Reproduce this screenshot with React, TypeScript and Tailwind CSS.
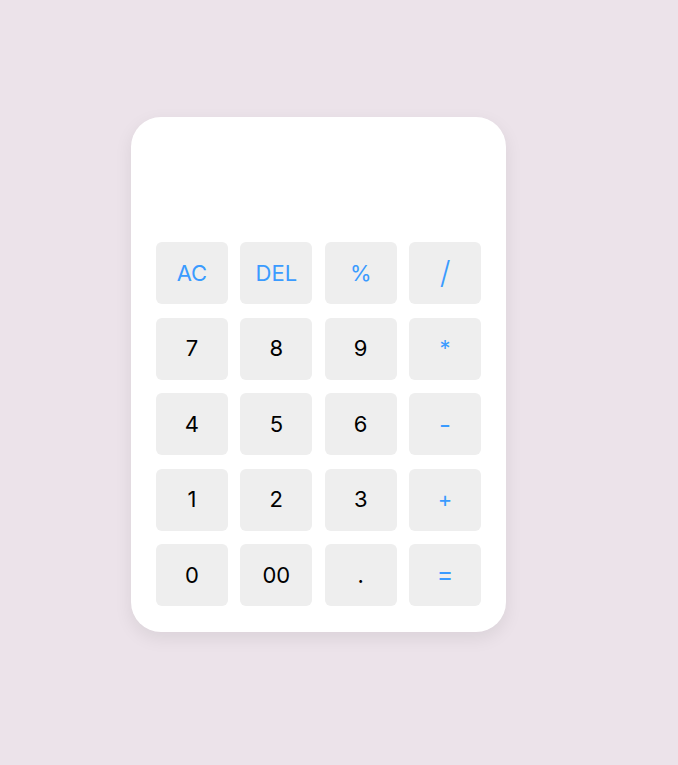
const keys: { label: string; op?: boolean; size?: string }[] = [
  { label: "AC", op: true },
  { label: "DEL", op: true },
  { label: "%", op: true },
  { label: "/", op: true, size: "text-[31px] font-light" },
  { label: "7" },
  { label: "8" },
  { label: "9" },
  { label: "*", op: true },
  { label: "4" },
  { label: "5" },
  { label: "6" },
  { label: "-", op: true, size: "text-[26px]" },
  { label: "1" },
  { label: "2" },
  { label: "3" },
  { label: "+", op: true },
  { label: "0" },
  { label: "00" },
  { label: "." },
  { label: "=", op: true, size: "text-[25px]" },
];

export default function App() {
  return (
    <div className="min-h-screen bg-[#ece3ea] pl-[131px] pt-[117px] font-['Inter','Liberation_Sans',sans-serif]">
      <div className="w-[375px] rounded-[30px] bg-white px-[25px] pb-[26px] shadow-[0_6px_18px_rgba(0,0,0,0.08)]">
        <div className="h-[125px]" />
        <div className="grid grid-cols-4 gap-x-[12.5px] gap-y-[13.5px]">
          {keys.map((k) => (
            <button
              key={k.label}
              className={`flex h-[62px] items-center justify-center rounded-[6px] bg-[#eeeeee] ${
                k.size ?? "text-[22px] font-normal"
              } ${k.op ? "text-[#3a9bff]" : "text-black"}`}
            >
              {k.label}
            </button>
          ))}
        </div>
      </div>
    </div>
  );
}
